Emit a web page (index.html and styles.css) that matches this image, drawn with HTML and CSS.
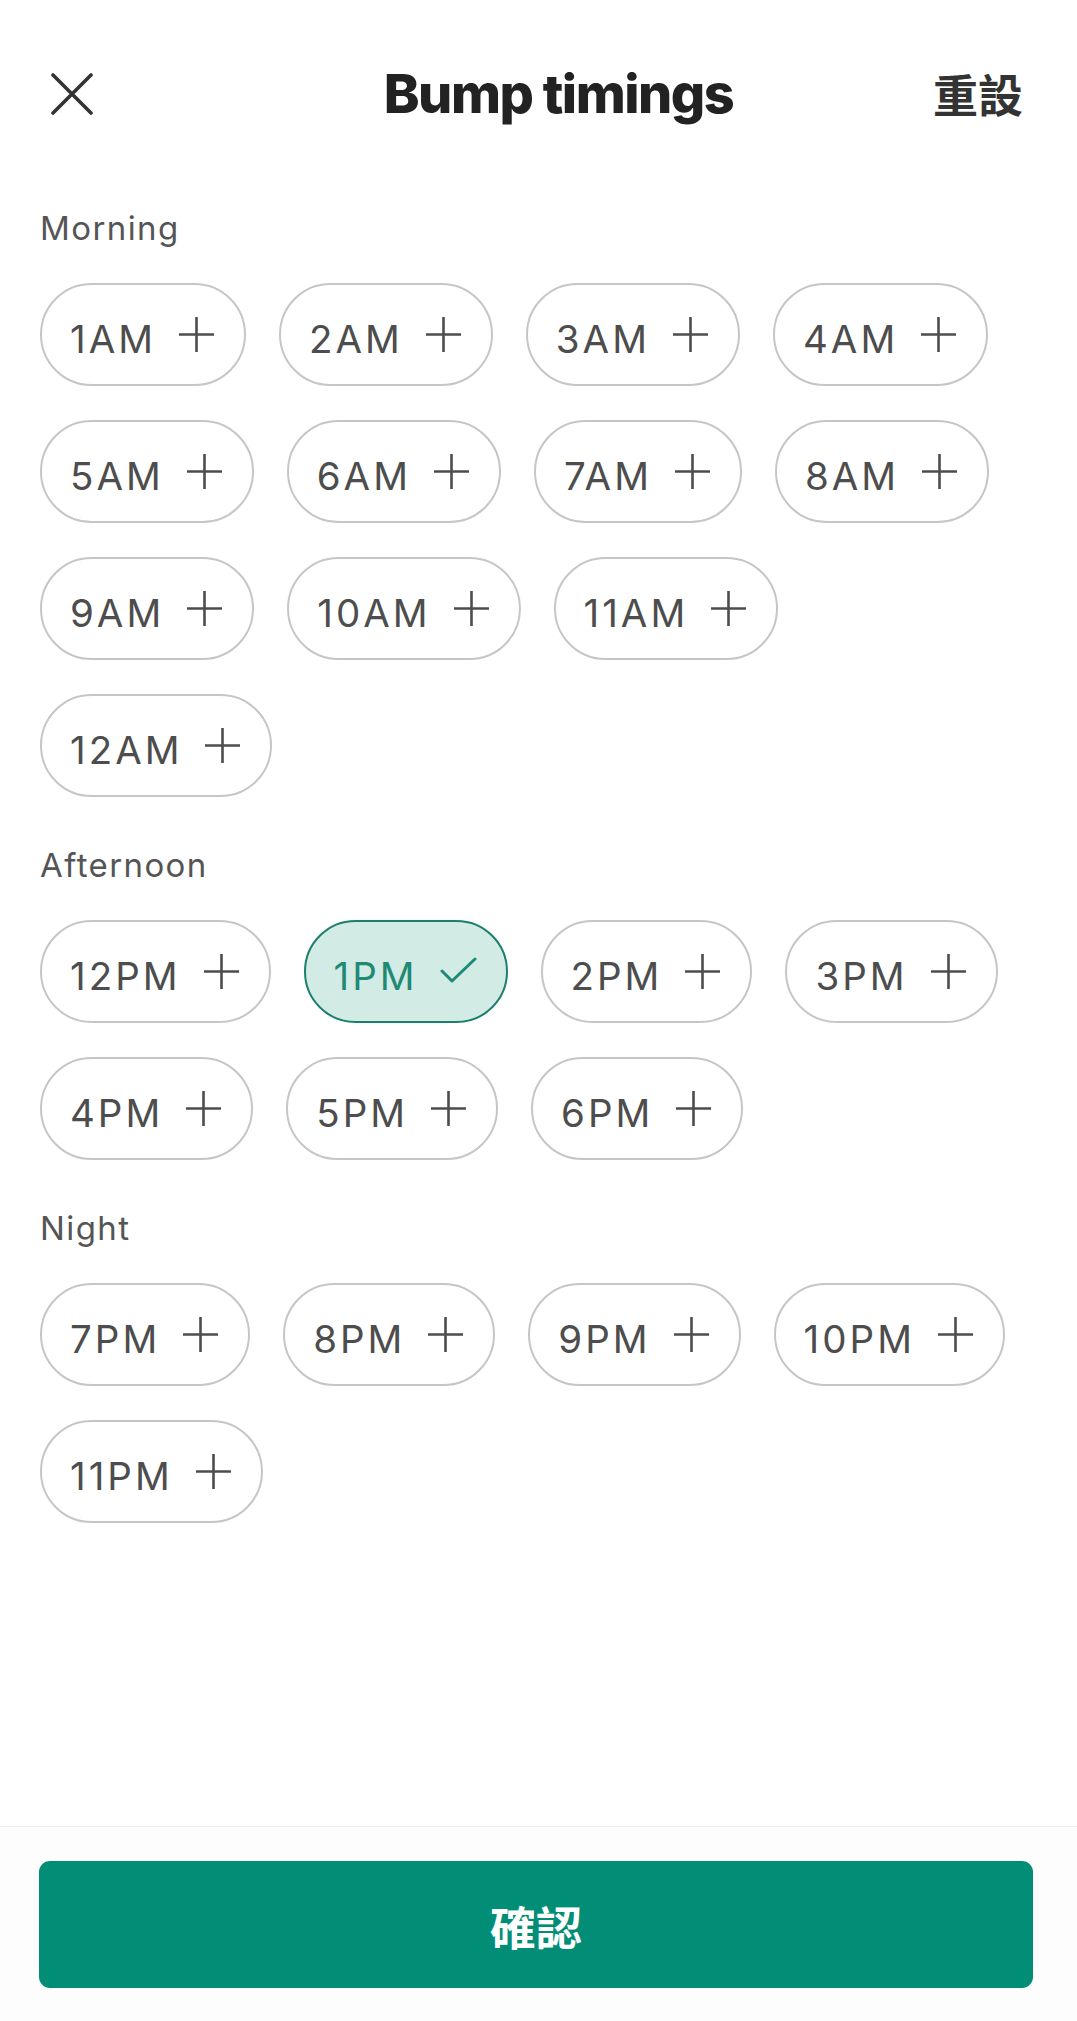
FILE: index.html
```html
<!DOCTYPE html>
<html lang="zh-Hant">
<head>
<meta charset="utf-8">
<title>Bump timings</title>
<link rel="stylesheet" href="styles.css">
</head>
<body>
<div class="screen">
  <header class="topbar">
    <button class="close" aria-label="Close">
      <svg viewBox="0 0 42 42" width="42" height="42"><path d="M2 2 L40 40 M40 2 L2 40" fill="none" stroke="#333" stroke-width="3.6" stroke-linecap="round"/></svg>
    </button>
    <h1 class="title">Bump timings</h1>
    <button class="reset">重設</button>
  </header>

  <main class="content">
    <section class="group">
      <h2 class="group-label">Morning</h2>
      <div class="chips">
        <button class="chip"><span class="chip-text">1AM</span><svg class="icon" viewBox="0 0 37 37"><path d="M18.5 1 V36 M1 18.5 H36"/></svg></button>
        <button class="chip"><span class="chip-text">2AM</span><svg class="icon" viewBox="0 0 37 37"><path d="M18.5 1 V36 M1 18.5 H36"/></svg></button>
        <button class="chip"><span class="chip-text">3AM</span><svg class="icon" viewBox="0 0 37 37"><path d="M18.5 1 V36 M1 18.5 H36"/></svg></button>
        <button class="chip"><span class="chip-text">4AM</span><svg class="icon" viewBox="0 0 37 37"><path d="M18.5 1 V36 M1 18.5 H36"/></svg></button>
        <button class="chip"><span class="chip-text">5AM</span><svg class="icon" viewBox="0 0 37 37"><path d="M18.5 1 V36 M1 18.5 H36"/></svg></button>
        <button class="chip"><span class="chip-text">6AM</span><svg class="icon" viewBox="0 0 37 37"><path d="M18.5 1 V36 M1 18.5 H36"/></svg></button>
        <button class="chip"><span class="chip-text">7AM</span><svg class="icon" viewBox="0 0 37 37"><path d="M18.5 1 V36 M1 18.5 H36"/></svg></button>
        <button class="chip"><span class="chip-text">8AM</span><svg class="icon" viewBox="0 0 37 37"><path d="M18.5 1 V36 M1 18.5 H36"/></svg></button>
        <button class="chip"><span class="chip-text">9AM</span><svg class="icon" viewBox="0 0 37 37"><path d="M18.5 1 V36 M1 18.5 H36"/></svg></button>
        <button class="chip"><span class="chip-text">10AM</span><svg class="icon" viewBox="0 0 37 37"><path d="M18.5 1 V36 M1 18.5 H36"/></svg></button>
        <button class="chip"><span class="chip-text">11AM</span><svg class="icon" viewBox="0 0 37 37"><path d="M18.5 1 V36 M1 18.5 H36"/></svg></button>
        <button class="chip"><span class="chip-text">12AM</span><svg class="icon" viewBox="0 0 37 37"><path d="M18.5 1 V36 M1 18.5 H36"/></svg></button>
      </div>
    </section>

    <section class="group">
      <h2 class="group-label">Afternoon</h2>
      <div class="chips">
        <button class="chip"><span class="chip-text">12PM</span><svg class="icon" viewBox="0 0 37 37"><path d="M18.5 1 V36 M1 18.5 H36"/></svg></button>
        <button class="chip chip--selected"><span class="chip-text">1PM</span><svg class="icon" viewBox="0 0 37 37"><path d="M2 18 L12 28 L35 6"/></svg></button>
        <button class="chip"><span class="chip-text">2PM</span><svg class="icon" viewBox="0 0 37 37"><path d="M18.5 1 V36 M1 18.5 H36"/></svg></button>
        <button class="chip"><span class="chip-text">3PM</span><svg class="icon" viewBox="0 0 37 37"><path d="M18.5 1 V36 M1 18.5 H36"/></svg></button>
        <button class="chip"><span class="chip-text">4PM</span><svg class="icon" viewBox="0 0 37 37"><path d="M18.5 1 V36 M1 18.5 H36"/></svg></button>
        <button class="chip"><span class="chip-text">5PM</span><svg class="icon" viewBox="0 0 37 37"><path d="M18.5 1 V36 M1 18.5 H36"/></svg></button>
        <button class="chip"><span class="chip-text">6PM</span><svg class="icon" viewBox="0 0 37 37"><path d="M18.5 1 V36 M1 18.5 H36"/></svg></button>
      </div>
    </section>

    <section class="group">
      <h2 class="group-label">Night</h2>
      <div class="chips">
        <button class="chip"><span class="chip-text">7PM</span><svg class="icon" viewBox="0 0 37 37"><path d="M18.5 1 V36 M1 18.5 H36"/></svg></button>
        <button class="chip"><span class="chip-text">8PM</span><svg class="icon" viewBox="0 0 37 37"><path d="M18.5 1 V36 M1 18.5 H36"/></svg></button>
        <button class="chip"><span class="chip-text">9PM</span><svg class="icon" viewBox="0 0 37 37"><path d="M18.5 1 V36 M1 18.5 H36"/></svg></button>
        <button class="chip"><span class="chip-text">10PM</span><svg class="icon" viewBox="0 0 37 37"><path d="M18.5 1 V36 M1 18.5 H36"/></svg></button>
        <button class="chip"><span class="chip-text">11PM</span><svg class="icon" viewBox="0 0 37 37"><path d="M18.5 1 V36 M1 18.5 H36"/></svg></button>
      </div>
    </section>
  </main>

  <footer class="footer">
    <button class="confirm">確認</button>
  </footer>
</div>
</body>
</html>
```

FILE: styles.css
```css
* { box-sizing: border-box; }

html, body {
  margin: 0;
  padding: 0;
  background: #ffffff;
}

body {
  font-family: "Inter", "Noto Sans CJK TC", sans-serif;
  color: #333;
}

button {
  font-family: inherit;
  cursor: pointer;
}

.screen {
  height: 100vh;
  display: flex;
  flex-direction: column;
}

/* Header */
.topbar {
  height: 188px;
  flex: none;
  display: flex;
  align-items: center;
  padding: 0 54px 0 51px;
}

.close {
  width: 42px;
  height: 42px;
  padding: 0;
  border: none;
  background: none;
  display: flex;
  flex: none;
}

.title {
  flex: 1;
  margin: 0;
  padding-left: 92px;
  text-align: center;
  font-family: "Inter", sans-serif;
  font-weight: 800;
  font-size: 54px;
  letter-spacing: -1.5px;
  color: #222;
  line-height: 64px;
}

.reset {
  flex: none;
  width: 91px;
  padding: 0;
  border: none;
  background: none;
  font-family: "Noto Sans CJK TC", sans-serif;
  font-weight: 700;
  font-size: 45px;
  line-height: 60px;
  color: #333;
  text-align: right;
  white-space: nowrap;
}

/* Content */
.content {
  flex: 1;
  padding: 20px 40px 0 40px;
}

.group + .group {
  margin-top: 48px;
}

.group-label {
  margin: 0 0 35px 0;
  font-family: "Inter", sans-serif;
  font-weight: 400;
  font-size: 33px;
  line-height: 40px;
  letter-spacing: 1.4px;
  color: #555;
}

.chips {
  display: flex;
  flex-wrap: wrap;
  gap: 34px 33px;
  padding-right: 20px;
}

.chip {
  height: 103px;
  display: inline-flex;
  align-items: center;
  gap: 22px;
  padding: 0 29px 0 28px;
  border: 2.5px solid #c6c6c6;
  border-radius: 52px;
  background: #fff;
  color: #4d4d4d;
}

.chip-text {
  font-family: "Inter", sans-serif;
  font-size: 38.5px;
  font-weight: 400;
  line-height: 38px;
  padding-top: 8px;
  letter-spacing: 3px;
}

.icon {
  width: 37px;
  height: 37px;
  flex: none;
  fill: none;
  stroke: #4d4d4d;
  stroke-width: 2.6;
}

.chip--selected {
  background: #d2ebe5;
  border-color: #1a806d;
  color: #1f8a74;
}

.chip--selected .icon {
  stroke: #1f8a74;
  stroke-width: 3;
  stroke-linecap: round;
  stroke-linejoin: round;
}

/* Footer */
.footer {
  flex: none;
  border-top: 1px solid #ebebeb;
  padding: 34px 44px 33px 39px;
  background: #fdfdfd;
}

.confirm {
  display: block;
  width: 100%;
  height: 127px;
  border: none;
  border-radius: 11px;
  background: #028e76;
  color: #ffffff;
  font-family: "Noto Sans CJK TC", sans-serif;
  font-weight: 700;
  font-size: 46px;
  line-height: 1;
}
```
